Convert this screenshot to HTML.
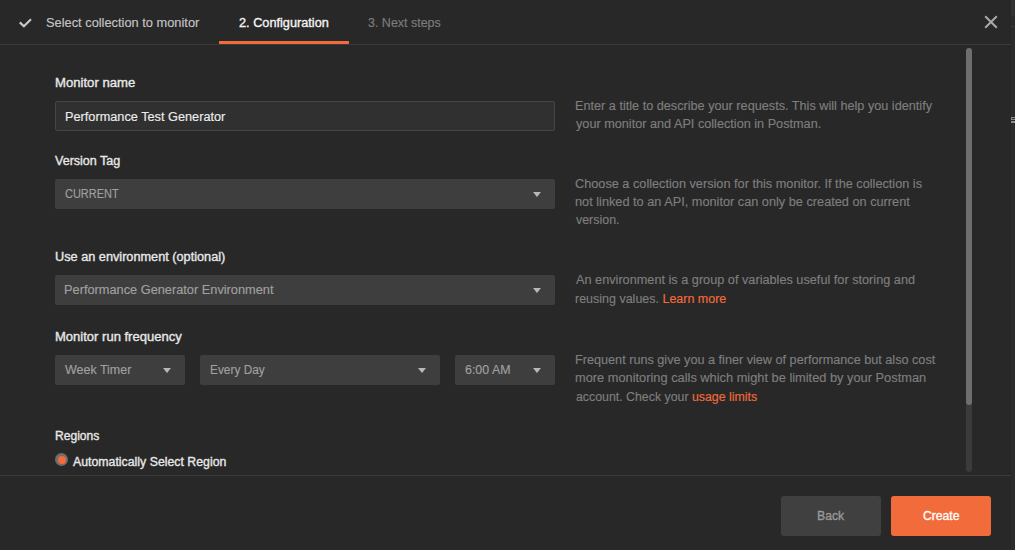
<!DOCTYPE html>
<html><head><meta charset="utf-8">
<style>
*{margin:0;padding:0;box-sizing:border-box}
html,body{width:1015px;height:550px;overflow:hidden;background:#282828;font-family:"Liberation Sans",sans-serif;}
.a{position:absolute}
.t{position:absolute;white-space:nowrap;line-height:16px;transform-origin:0 0}
.sel{position:absolute;background:#3e3e3e;border-radius:2px}
.caret{position:absolute;top:13px;width:0;height:0;border-left:4px solid transparent;border-right:4px solid transparent;border-top:5px solid #b8b8b8}
</style></head><body>
<!-- right strip (background app) -->
<div class="a" style="left:1011px;top:0;width:4px;height:550px;background:#2c2c2c"></div>
<div class="a" style="left:1011px;top:0;width:4px;height:16px;background:#333"></div>
<div class="a" style="left:1011px;top:26px;width:4px;height:1px;background:#3a3a3a"></div>
<div class="a" style="left:1011px;top:117px;width:4px;height:3px;border:1px solid #8c8c8c;border-right:none"></div>
<div class="a" style="left:1011px;top:121px;width:4px;height:2px;background:#8c8c8c"></div>

<!-- header -->
<svg class="a" style="left:18px;top:17px" width="15" height="12" viewBox="0 0 15 12"><path d="M1.8 5.4 L5.9 9.2 L13 2.2" fill="none" stroke="#c8c8c8" stroke-width="2.2"/></svg>
<div class="a" style="left:219px;top:41px;width:130px;height:3px;background:#f26b3a"></div>
<div class="a" style="left:0;top:44px;width:1011px;height:1px;background:#3b3b3b"></div>
<svg class="a" style="left:983px;top:14px" width="16" height="16" viewBox="0 0 16 16"><path d="M2.2 2.2 L13.8 13.8 M13.8 2.2 L2.2 13.8" stroke="#a9a9a9" stroke-width="2"/></svg>

<!-- form boxes -->
<div class="a" style="left:55px;top:101px;width:500px;height:30px;background:#303030;border:1px solid #454545;border-radius:2px"></div>
<div class="sel" style="left:55px;top:179px;width:500px;height:30px"><i class="caret" style="right:14px"></i></div>
<div class="sel" style="left:55px;top:275px;width:500px;height:30px"><i class="caret" style="right:14px"></i></div>
<div class="sel" style="left:55px;top:355px;width:130px;height:30px"><i class="caret" style="right:14px"></i></div>
<div class="sel" style="left:200px;top:355px;width:240px;height:30px"><i class="caret" style="right:14px"></i></div>
<div class="sel" style="left:455px;top:355px;width:100px;height:30px"><i class="caret" style="right:14px"></i></div>

<!-- radio -->
<div class="a" style="left:55px;top:453px;width:13px;height:13px;border-radius:50%;background:#6e6e6e"></div>
<div class="a" style="left:57.5px;top:455.5px;width:8px;height:8px;border-radius:50%;background:#f26b3a"></div>

<!-- scrollbar -->
<div class="a" style="left:966px;top:48px;width:6px;height:424px;border-radius:3px;background:#3b3b3b"></div>
<div class="a" style="left:966px;top:48px;width:6px;height:357px;border-radius:3px;background:#6e6e6e"></div>

<!-- footer -->
<div class="a" style="left:0;top:475px;width:1011px;height:1px;background:#3b3b3b"></div>
<div class="a" style="left:781px;top:496px;width:100px;height:40px;border-radius:3px;background:#404040"></div>
<div class="a" style="left:891px;top:496px;width:100px;height:40px;border-radius:3px;background:#f26b3a"></div>
<div class="t" id="h1" style="left:45.95px;top:15.00px;font-size:12.5px;font-weight:normal;color:#c4c4c4;transform:scaleX(1.0262);-webkit-text-stroke:0.15px currentColor;">Select collection to monitor</div>
<div class="t" id="h2" style="left:239.10px;top:15.00px;font-size:12.5px;font-weight:normal;color:#f4f4f4;transform:scaleX(1.0177);-webkit-text-stroke:0.35px currentColor;">2. Configuration</div>
<div class="t" id="h3" style="left:368.00px;top:15.00px;font-size:12.5px;font-weight:normal;color:#7c7c7c;transform:scaleX(0.9979);-webkit-text-stroke:0.15px currentColor;">3. Next steps</div>
<div class="t" id="l1" style="left:54.85px;top:75.00px;font-size:12.5px;font-weight:normal;color:#e8e8e8;transform:scaleX(1.0504);-webkit-text-stroke:0.35px currentColor;">Monitor name</div>
<div class="t" id="l2" style="left:54.95px;top:153.00px;font-size:12.5px;font-weight:normal;color:#e8e8e8;transform:scaleX(1.0026);-webkit-text-stroke:0.35px currentColor;">Version Tag</div>
<div class="t" id="l3" style="left:54.85px;top:249.00px;font-size:12.5px;font-weight:normal;color:#e8e8e8;transform:scaleX(1.0169);-webkit-text-stroke:0.35px currentColor;">Use an environment (optional)</div>
<div class="t" id="l4" style="left:54.90px;top:329.00px;font-size:12.5px;font-weight:normal;color:#e8e8e8;transform:scaleX(1.0419);-webkit-text-stroke:0.35px currentColor;">Monitor run frequency</div>
<div class="t" id="l5" style="left:54.85px;top:428.00px;font-size:12.5px;font-weight:normal;color:#e8e8e8;transform:scaleX(0.9670);-webkit-text-stroke:0.35px currentColor;">Regions</div>
<div class="t" id="i1" style="left:65.10px;top:109.00px;font-size:12.5px;font-weight:normal;color:#ececec;transform:scaleX(1.0180);-webkit-text-stroke:0.15px currentColor;">Performance Test Generator</div>
<div class="t" id="s1" style="left:65.20px;top:186.00px;font-size:12.5px;font-weight:normal;color:#a0a0a0;transform:scaleX(0.8770);-webkit-text-stroke:0.15px currentColor;">CURRENT</div>
<div class="t" id="s2" style="left:64.10px;top:282.00px;font-size:12.5px;font-weight:normal;color:#a0a0a0;transform:scaleX(1.0221);-webkit-text-stroke:0.15px currentColor;">Performance Generator Environment</div>
<div class="t" id="s3" style="left:64.97px;top:362.00px;font-size:12.5px;font-weight:normal;color:#a0a0a0;transform:scaleX(0.9980);-webkit-text-stroke:0.15px currentColor;">Week Timer</div>
<div class="t" id="s4" style="left:209.90px;top:362.00px;font-size:12.5px;font-weight:normal;color:#a0a0a0;transform:scaleX(0.9496);-webkit-text-stroke:0.15px currentColor;">Every Day</div>
<div class="t" id="s5" style="left:465.20px;top:362.00px;font-size:12.5px;font-weight:normal;color:#a0a0a0;transform:scaleX(0.9925);-webkit-text-stroke:0.15px currentColor;">6:00 AM</div>
<div class="t" id="p1" style="left:574.95px;top:98.00px;font-size:12.5px;font-weight:normal;color:#7e7e7e;transform:scaleX(1.0142);-webkit-text-stroke:0.15px currentColor;">Enter a title to describe your requests. This will help you identify</div>
<div class="t" id="p2" style="left:575.95px;top:116.00px;font-size:12.5px;font-weight:normal;color:#7e7e7e;transform:scaleX(1.0141);-webkit-text-stroke:0.15px currentColor;">your monitor and API collection in Postman.</div>
<div class="t" id="p3" style="left:575.35px;top:176.00px;font-size:12.5px;font-weight:normal;color:#7e7e7e;transform:scaleX(1.0173);-webkit-text-stroke:0.15px currentColor;">Choose a collection version for this monitor. If the collection is</div>
<div class="t" id="p4" style="left:574.95px;top:194.00px;font-size:12.5px;font-weight:normal;color:#7e7e7e;transform:scaleX(1.0186);-webkit-text-stroke:0.15px currentColor;">not linked to an API, monitor can only be created on current</div>
<div class="t" id="p5" style="left:575.95px;top:212.00px;font-size:12.5px;font-weight:normal;color:#7e7e7e;transform:scaleX(0.9941);-webkit-text-stroke:0.15px currentColor;">version.</div>
<div class="t" id="p6" style="left:575.95px;top:272.00px;font-size:12.5px;font-weight:normal;color:#7e7e7e;transform:scaleX(1.0165);-webkit-text-stroke:0.15px currentColor;">An environment is a group of variables useful for storing and</div>
<div class="t" id="p7" style="left:574.95px;top:291.00px;font-size:12.5px;font-weight:normal;color:#7e7e7e;transform:scaleX(0.9988);-webkit-text-stroke:0.15px currentColor;">reusing values. <span style="color:#f26b3a">Learn more</span></div>
<div class="t" id="p8" style="left:574.95px;top:352.00px;font-size:12.5px;font-weight:normal;color:#7e7e7e;transform:scaleX(1.0127);-webkit-text-stroke:0.15px currentColor;">Frequent runs give you a finer view of performance but also cost</div>
<div class="t" id="p9" style="left:574.95px;top:370.00px;font-size:12.5px;font-weight:normal;color:#7e7e7e;transform:scaleX(1.0252);-webkit-text-stroke:0.15px currentColor;">more monitoring calls which might be limited by your Postman</div>
<div class="t" id="p10" style="left:575.95px;top:389.00px;font-size:12.5px;font-weight:normal;color:#7e7e7e;transform:scaleX(0.9875);-webkit-text-stroke:0.15px currentColor;">account. Check your <span style="color:#f26b3a">usage limits</span></div>
<div class="t" id="r1" style="left:72.90px;top:454.00px;font-size:12.5px;font-weight:normal;color:#e8e8e8;transform:scaleX(0.9854);-webkit-text-stroke:0.35px currentColor;">Automatically Select Region</div>
<div class="t" id="b1" style="left:817.00px;top:508.00px;font-size:12.5px;font-weight:normal;color:#9a9a9a;transform:scaleX(0.9771);-webkit-text-stroke:0.35px currentColor;">Back</div>
<div class="t" id="b2" style="left:922.95px;top:508.00px;font-size:12.5px;font-weight:normal;color:#ffffff;transform:scaleX(0.9716);-webkit-text-stroke:0.35px currentColor;">Create</div>
</body></html>
